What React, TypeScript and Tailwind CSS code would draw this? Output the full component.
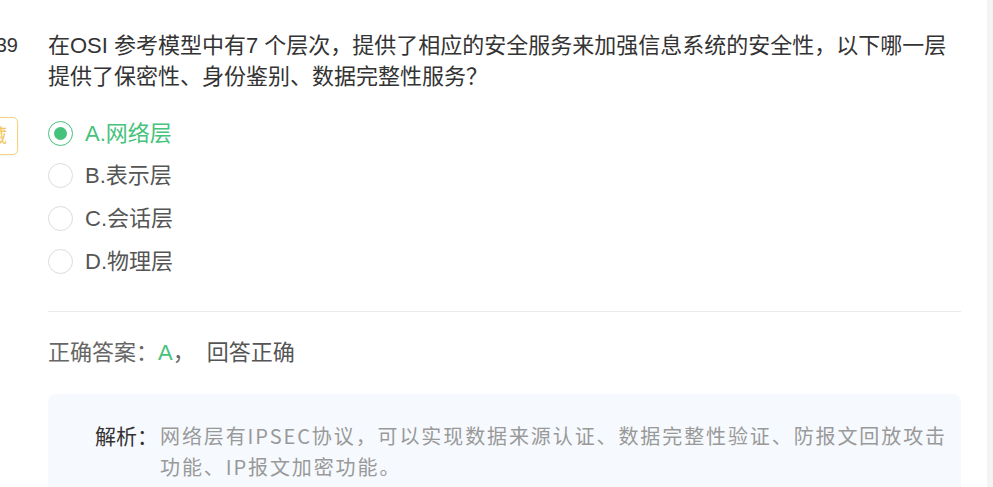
export default function App() {
  const options = [
    { key: 'A', text: '网络层', checked: true },
    { key: 'B', text: '表示层', checked: false },
    { key: 'C', text: '会话层', checked: false },
    { key: 'D', text: '物理层', checked: false },
  ];

  return (
    <div className="flex min-h-screen bg-white overflow-hidden font-['Liberation_Sans','Noto_Sans_CJK_SC',sans-serif]">
      <div className="flex flex-1 pt-[30px] pr-[26px]">
        {/* left column: number + favourite badge, partly cut off */}
        <div className="flex w-[18px] shrink-0 flex-col items-end">
          <div className="whitespace-nowrap text-[20px] leading-[31px] text-[#333]">39</div>
          <div className="mt-[56px] flex h-[38px] w-[58px] shrink-0 items-center justify-center rounded-[5px] border border-[#f6d47c] text-[18px] text-[#f2c75c] shadow-[0_1px_3px_rgba(0,0,0,0.06)]">
            收藏
          </div>
        </div>

        <div className="ml-[30px] flex-1">
          <p className="text-[22px] leading-[31px] text-[#333]">
            在OSI 参考模型中有7 个层次，提供了相应的安全服务来加强信息系统的安全性，以下哪一层提供了保密性、身份鉴别、数据完整性服务？
          </p>

          <div className="mt-[20px]">
            {options.map((o) => (
              <div key={o.key} className="flex h-[42.6px] items-center">
                <span
                  className={
                    o.checked
                      ? 'flex h-[25px] w-[25px] items-center justify-center rounded-full border border-[#45c27c]'
                      : 'flex h-[25px] w-[25px] items-center justify-center rounded-full border border-[#dcdcdc]'
                  }
                >
                  {o.checked && <span className="h-[13px] w-[13px] rounded-full bg-[#45c27c]" />}
                </span>
                <span
                  className={
                    o.checked
                      ? 'ml-[12px] text-[22px] text-[#45c27c]'
                      : 'ml-[12px] text-[22px] text-[#555]'
                  }
                >
                  {o.key}.{o.text}
                </span>
              </div>
            ))}
          </div>

          <div className="mt-[29px] h-px bg-[#ebebeb]" />

          <div className="mt-[25px] text-[22px] leading-[31px] text-[#666]">
            正确答案：<span className="text-[#45c27c]">A</span>， <span className="ml-[6px] text-[#555]">回答正确</span>
          </div>

          <div className="mt-[26px] flex rounded-[8px] bg-[#f6f9fe] pl-[47px] pr-[12px] pt-[26px] pb-[30px] font-['Noto_Sans_CJK_SC',sans-serif]">
            <div className="w-[65px] shrink-0 text-[21px] leading-[31px] text-[#333]">解析：</div>
            <p className="text-[20px] leading-[31px] tracking-[1.9px] text-[#999]">
              网络层有IPSEC协议，可以实现数据来源认证、数据完整性验证、防报文回放攻击功能、IP报文加密功能。
            </p>
          </div>
        </div>
      </div>
      <div className="w-[6px] shrink-0 bg-[#f4f4f5]" />
    </div>
  );
}
